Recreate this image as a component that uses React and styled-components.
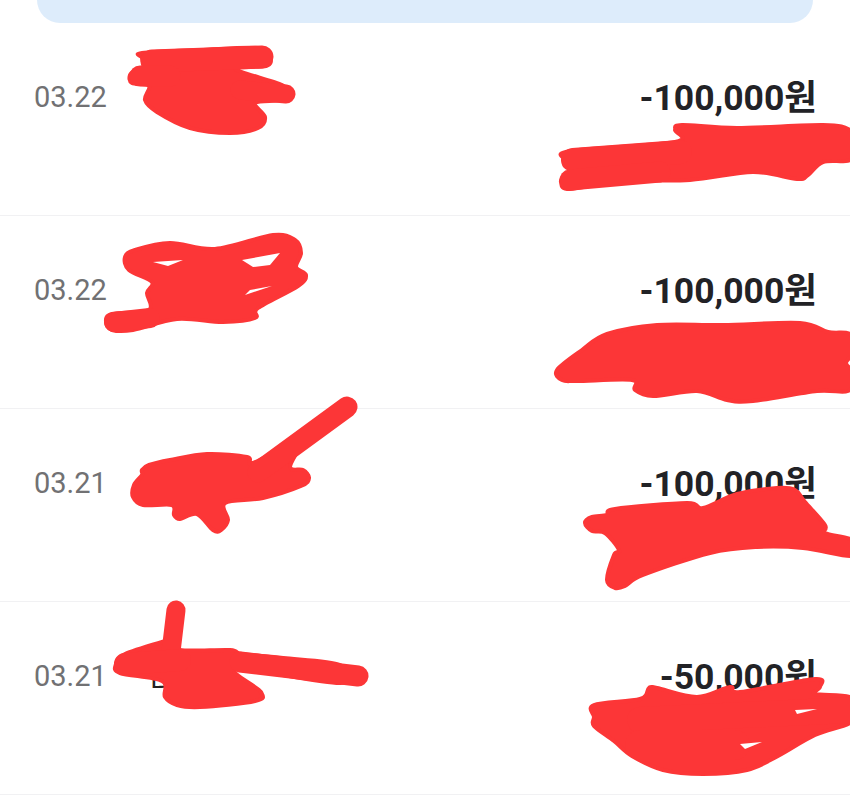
import React from 'react';
import styled, { createGlobalStyle } from 'styled-components';

const GlobalStyle = createGlobalStyle`
  html, body {
    margin: 0;
    padding: 0;
    background: #fff;
  }
`;

const rows = [
  { id: 1, date: '03.22', title: '다', amount: '-100,000원' },
  { id: 2, date: '03.22', title: '다', amount: '-100,000원' },
  { id: 3, date: '03.21', title: '다', amount: '-100,000원' },
  { id: 4, date: '03.21', title: '다', amount: '-50,000원' },
];

// hand drawn censor marks, traced from the picture
const marks = [
  [[142,53],[200,50],[258,48],[270,58],[266,66],[235,69],[282,85],[285,94],[280,100],[255,103],[265,117],[258,128],[230,133],[190,128],[157,112],[145,100],[149,86],[132,83],[130,75],[137,70],[144,70],[142,58]],
  [[570,151],[675,142],[675,130],[682,125],[737,128],[823,125],[850,130],[856,145],[850,160],[823,162],[808,175],[797,179],[753,172],[690,180],[623,181],[570,189],[561,182],[565,175],[575,169],[566,160]],
  [[125,257],[135,250],[170,243],[215,249],[273,235],[295,240],[301,253],[296,267],[306,275],[298,286],[258,308],[255,318],[223,322],[177,319],[133,330],[112,330],[106,322],[112,314],[149,310],[147,293],[152,282],[129,270]],
  [[557,370],[582,350],[607,334],[657,325],[723,325],[800,323],[828,332],[850,334],[856,350],[846,363],[856,375],[848,391],[817,391],[753,401],[727,400],[697,391],[653,396],[635,390],[632,380],[577,381],[562,380]],
  [[142,470],[149,465],[170,460],[207,454],[247,457],[253,463],[300,440],[290,467],[303,470],[309,478],[301,486],[263,498],[225,503],[228,520],[221,530],[213,530],[197,514],[180,519],[174,515],[172,505],[143,505],[133,497],[134,485],[142,475]],
  [[585,523],[592,517],[607,515],[615,509],[687,503],[703,508],[737,494],[777,488],[795,490],[805,502],[825,525],[825,533],[850,539],[856,548],[850,556],[803,548],[757,547],[710,553],[643,575],[625,586],[615,588],[607,580],[614,555],[619,550],[605,533],[592,531]],
  [[172,640],[180,650],[230,650],[242,654],[283,658],[340,665],[340,683],[237,669],[261,692],[255,701],[200,707],[177,705],[165,697],[162,681],[120,673],[116,664],[125,654],[162,642]],
  [[594,705],[640,699],[649,688],[657,688],[697,697],[730,687],[740,692],[815,679],[820,687],[815,694],[850,697],[856,710],[850,723],[815,735],[778,756],[747,770],[703,774],[663,770],[632,756],[614,741],[594,726],[594,717]],
];

// straight pen strokes on top of the blobs: [x1, y1, x2, y2, width]
const strokes = [
  [152, 61, 262, 57, 23],
  [286, 94, 240, 90, 19],
  [140, 76, 170, 76, 21],
  [114, 322, 150, 318, 20],
  [573, 160, 680, 152, 24],
  [570, 180, 660, 172, 21],
  [347, 407, 258, 472, 21],
  [176, 610, 170, 660, 19],
  [358, 676, 240, 662, 21],
  [125, 664, 180, 660, 22],
  [640, 720, 850, 710, 26],
  [640, 745, 735, 745, 30],
];

// gaps left open inside the marks
const holes = [
  [[153,262],[183,260],[168,266]],
  [[242,260],[280,253],[270,265],[253,267]],
  [[245,295],[272,286],[250,290]],
  [[795,710],[817,709],[797,714]],
  [[740,744],[762,742],[745,749]],
];

const smooth = (pts) => {
  const n = pts.length;
  let d = `M${pts[0][0]} ${pts[0][1]}`;
  for (let i = 0; i < n; i++) {
    const p0 = pts[(i - 1 + n) % n];
    const p1 = pts[i];
    const p2 = pts[(i + 1) % n];
    const p3 = pts[(i + 2) % n];
    const c1x = p1[0] + (p2[0] - p0[0]) / 6;
    const c1y = p1[1] + (p2[1] - p0[1]) / 6;
    const c2x = p2[0] - (p3[0] - p1[0]) / 6;
    const c2y = p2[1] - (p3[1] - p1[1]) / 6;
    d += `C${c1x.toFixed(1)} ${c1y.toFixed(1)} ${c2x.toFixed(1)} ${c2y.toFixed(1)} ${p2[0]} ${p2[1]}`;
  }
  return d + 'Z';
};

export default function App() {
  return (
    <Page>
      <GlobalStyle />
      <Banner />
      <List>
        {rows.map((row) => (
          <Row key={row.id}>
            <DateText>{row.date}</DateText>
            <Title>{row.title}</Title>
            <Amount>{row.amount}</Amount>
          </Row>
        ))}
      </List>
      <Scribbles viewBox="0 0 850 796">
        {marks.map((m, i) => (
          <path key={i} d={smooth(m)} fill="#fc3637" stroke="#fc3637" strokeWidth="4" strokeLinejoin="round" />
        ))}
        {strokes.map(([x1, y1, x2, y2, w], i) => (
          <line key={i} x1={x1} y1={y1} x2={x2} y2={y2} stroke="#fc3637" strokeWidth={w} strokeLinecap="round" />
        ))}
        {holes.map((h, i) => (
          <polygon key={i} points={h.join(' ')} fill="#fff" />
        ))}
      </Scribbles>
    </Page>
  );
}

const Page = styled.div`
  position: relative;
  width: 850px;
  height: 796px;
  overflow: hidden;
  background: #fff;
  font-family: Roboto, "Noto Sans CJK KR", sans-serif;
`;

const Banner = styled.div`
  height: 23px;
  margin: 0 37px;
  background: #ddecfb;
  border-radius: 0 0 24px 24px;
`;

const List = styled.div`
  display: flex;
  flex-direction: column;
`;

const Row = styled.div`
  display: flex;
  align-items: center;
  box-sizing: border-box;
  height: 193px;
  padding: 0 34px 44px;
  border-bottom: 1px solid #f1f1f3;
`;

const DateText = styled.span`
  width: 116px;
  flex: none;
  font-size: 29px;
  color: #717173;
`;

const Title = styled.span`
  flex: 1;
  margin-top: 6px;
  font-size: 30px;
  color: #222;
`;

const Amount = styled.span`
  margin-bottom: 6px;
  margin-right: -1px;
  font-size: 35.5px;
  font-weight: 700;
  color: #222226;
`;

const Scribbles = styled.svg`
  position: absolute;
  top: 0;
  left: 0;
  width: 850px;
  height: 796px;
  pointer-events: none;
`;
